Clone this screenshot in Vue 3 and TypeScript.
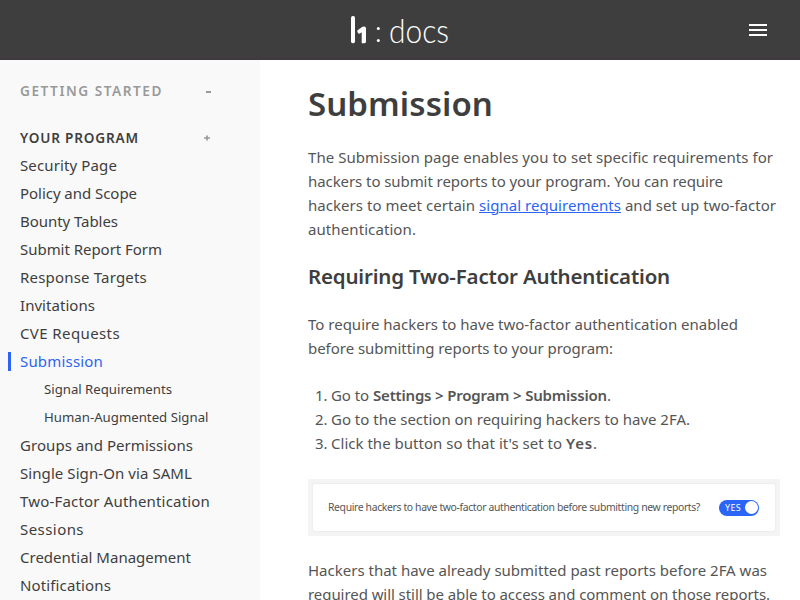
<script setup lang="ts">
import type { Directive } from 'vue'

interface NavItem { label: string; width: number; sub?: boolean; active?: boolean }
interface Run { text: string; width: number; kind?: 'link' | 'strong' }

const nav: NavItem[] = [
  { label: 'Security Page', width: 97 },
  { label: 'Policy and Scope', width: 117 },
  { label: 'Bounty Tables', width: 98 },
  { label: 'Submit Report Form', width: 142 },
  { label: 'Response Targets', width: 127 },
  { label: 'Invitations', width: 75 },
  { label: 'CVE Requests', width: 100 },
  { label: 'Submission', width: 83, active: true },
  { label: 'Signal Requirements', width: 128, sub: true },
  { label: 'Human-Augmented Signal', width: 164.5, sub: true },
  { label: 'Groups and Permissions', width: 173 },
  { label: 'Single Sign-On via SAML', width: 172 },
  { label: 'Two-Factor Authentication', width: 190 },
  { label: 'Sessions', width: 64 },
  { label: 'Credential Management', width: 171 },
  { label: 'Notifications', width: 91 },
]

const intro: Run[][] = [
  [{ text: 'The Submission page enables you to set specific requirements for', width: 465 }],
  [{ text: 'hackers to submit reports to your program. You can require', width: 415 }],
  [
    { text: 'hackers to meet certain ', width: 171 },
    { text: 'signal requirements', width: 142, kind: 'link' },
    { text: ' and set up two-factor', width: 155 },
  ],
  [{ text: 'authentication.', width: 108 }],
]
const lead: Run[][] = [
  [{ text: 'To require hackers to have two-factor authentication enabled', width: 430 }],
  [{ text: 'before submitting reports to your program:', width: 305 }],
]
const steps: Run[][] = [
  [
    { text: 'Go to ', width: 42 },
    { text: 'Settings > Program > Submission', width: 234, kind: 'strong' },
    { text: '.', width: 4 },
  ],
  [{ text: 'Go to the section on requiring hackers to have 2FA.', width: 359 }],
  [
    { text: "Click the button so that it's set to ", width: 235 },
    { text: 'Yes', width: 27, kind: 'strong' },
    { text: '.', width: 4 },
  ],
]
const outro: Run[][] = [
  [{ text: 'Hackers that have already submitted past reports before 2FA was', width: 459 }],
  [{ text: 'required will still be able to access and comment on those reports.', width: 462 }],
]

// Tracks a run of text out (or in) to the measure it is set for.
const vFit: Directive<HTMLElement, number> = {
  mounted(el, { value }) {
    const natural = el.getBoundingClientRect().width
    const count = (el.textContent ?? '').length
    if (count > 0) el.style.letterSpacing = `${(value - natural) / count}px`
  },
}
</script>

<template>
  <div class="page">
    <header class="topbar">
      <span class="side"></span>
      <svg class="logo" width="100" height="56" viewBox="0 -10 100 56" fill="#fff" aria-label="docs">
        <rect x="1" y="4" width="4" height="27.3" rx="1.7" />
        <path d="M12 31.3q-.3-.3-.3-1.4V20.3l-1.8 1.2q-1 .5-1.8-.5l-.7-1q-.6-1.2.5-2l4.6-3.2q.7-.4 1.6-.4 1.9 0 1.9 1.9v13.4q0 1.6-2 1.6-1.5 0-2 0z" />
        <circle cx="28.3" cy="16.6" r="1.5" />
        <circle cx="28.3" cy="28.6" r="1.5" />
        <text class="wordmark" x="39" y="31" textLength="60" lengthAdjust="spacingAndGlyphs">docs</text>
      </svg>
      <span class="side right"><span class="burger"><i></i><i></i><i></i></span></span>
    </header>
    <div class="body">
      <nav class="sidebar">
        <div class="group muted"><span v-fit="143">GETTING STARTED</span><i class="minus"></i></div>
        <div class="group"><span v-fit="119">YOUR PROGRAM</span>
          <svg width="6" height="6" viewBox="0 0 6 6"><path d="M0 3h6M3 .5v5" stroke="#999" stroke-width="1.7" /></svg>
        </div>
        <a v-for="item in nav" :key="item.label" class="item" :class="{ sub: item.sub, active: item.active }">
          <span v-fit="item.width">{{ item.label }}</span>
        </a>
      </nav>
      <main class="content">
        <h1><span v-fit="185">Submission</span></h1>
        <p class="intro">
          <span v-for="(line, i) in intro" :key="i" class="line"><span v-for="run in line" :key="run.text" v-fit="run.width" :class="run.kind">{{ run.text }}</span></span>
        </p>
        <h2><span v-fit="362">Requiring Two-Factor Authentication</span></h2>
        <p class="lead">
          <span v-for="(line, i) in lead" :key="i" class="line"><span v-for="run in line" :key="run.text" v-fit="run.width">{{ run.text }}</span></span>
        </p>
        <div class="steps">
          <div v-for="(line, i) in steps" :key="i" class="line"><span class="num">{{ i + 1 }}.</span><span v-for="run in line" :key="run.text" v-fit="run.width" :class="run.kind">{{ run.text }}</span></div>
        </div>
        <div class="figure">
          <div class="card">
            <span v-fit="372">Require hackers to have two-factor authentication before submitting new reports?</span>
            <span class="toggle"><span v-fit="16">YES</span><i></i></span>
          </div>
        </div>
        <p class="outro">
          <span v-for="(line, i) in outro" :key="i" class="line"><span v-for="run in line" :key="run.text" v-fit="run.width">{{ run.text }}</span></span>
        </p>
      </main>
    </div>
  </div>
</template>

<style>
body { margin: 0; overflow: hidden; }
</style>

<style scoped>
.page { width: 800px; height: 600px; overflow: hidden; display: flex; flex-direction: column; background: #fff; color: #555; font-family: "Noto Sans", "Open Sans", sans-serif; font-size: 15px; box-sizing: border-box; }
.topbar { height: 60px; flex: none; box-sizing: border-box; display: flex; align-items: center; justify-content: space-between; background: #3e3e3e; border-bottom: 3px solid #3e3a3e; padding: 3px 33px 0 33px; }
.side { width: 100px; display: flex; }
.right { justify-content: flex-end; }
.logo { overflow: visible; }
.wordmark { font-family: Lato, sans-serif; font-weight: 300; font-size: 34px; }
.burger { display: flex; flex-direction: column; gap: 3px; }
.burger i { width: 18px; height: 2px; background: #fff; }
.body { flex: 1; display: flex; min-height: 0; }
.sidebar { width: 260px; flex: none; box-sizing: border-box; background: #f9f9f9; padding: 17px 0 0 20px; color: #3e3e3e; }
.group { height: 28px; width: 191px; display: flex; align-items: center; justify-content: space-between; font-weight: 600; font-size: 13.6px; line-height: 18px; white-space: nowrap; color: #3e3e3e; }
.group span { padding-bottom: 1px; }
.group svg { margin-right: 1px; }
.muted { color: #999; margin-bottom: 19px; }
.minus { width: 5px; height: 2px; background: #999; margin-top: 2px; }
.item { height: 28px; box-sizing: border-box; padding-bottom: 2px; display: flex; align-items: center; white-space: nowrap; }
.sub { padding-left: 24px; font-size: 13.2px; }
.active { color: #2b65f5; }
.active::before { content: ""; width: 3px; height: 19px; background: #2b65f5; margin: 0 9px 0 -12px; }
.content { flex: 1; min-width: 0; padding: 21px 20px 0 48px; overflow: hidden; }
h1, h2, p { margin: 0; white-space: nowrap; }
h1 { color: #3e3e3e; font-size: 33px; line-height: 46px; font-weight: 600; }
h2 { color: #3e3e3e; font-size: 20.5px; line-height: 26px; font-weight: 600; margin-top: 22px; }
.intro { margin-top: 18px; }
.lead { margin-top: 23px; }
.line { display: block; line-height: 24px; white-space: pre; }
.link { color: #2b65f5; text-decoration: underline; text-decoration-thickness: 1px; text-underline-offset: 1px; }
.strong { font-weight: 600; }
.steps { margin-top: 23px; }
.num { display: inline-block; width: 16px; margin-left: 7px; }
.figure { margin-top: 24px; height: 57px; box-sizing: border-box; background: #f4f4f4; padding: 5px; }
.card { height: 47px; box-sizing: border-box; background: #fff; border-radius: 2px; box-shadow: 0 0 2px #ddd; display: flex; align-items: center; justify-content: space-between; padding: 0 16px 2px 15px; font-size: 10.4px; white-space: nowrap; }
.toggle { width: 40px; height: 16px; box-sizing: border-box; border-radius: 8px; background: #2b65f5; color: #fff; display: flex; align-items: center; justify-content: space-between; padding: 0 1px 0 6px; font-size: 9px; margin-top: 2px; }
.toggle i { width: 13px; height: 13px; border-radius: 50%; background: #fff; }
.outro { margin-top: 22px; }
</style>
